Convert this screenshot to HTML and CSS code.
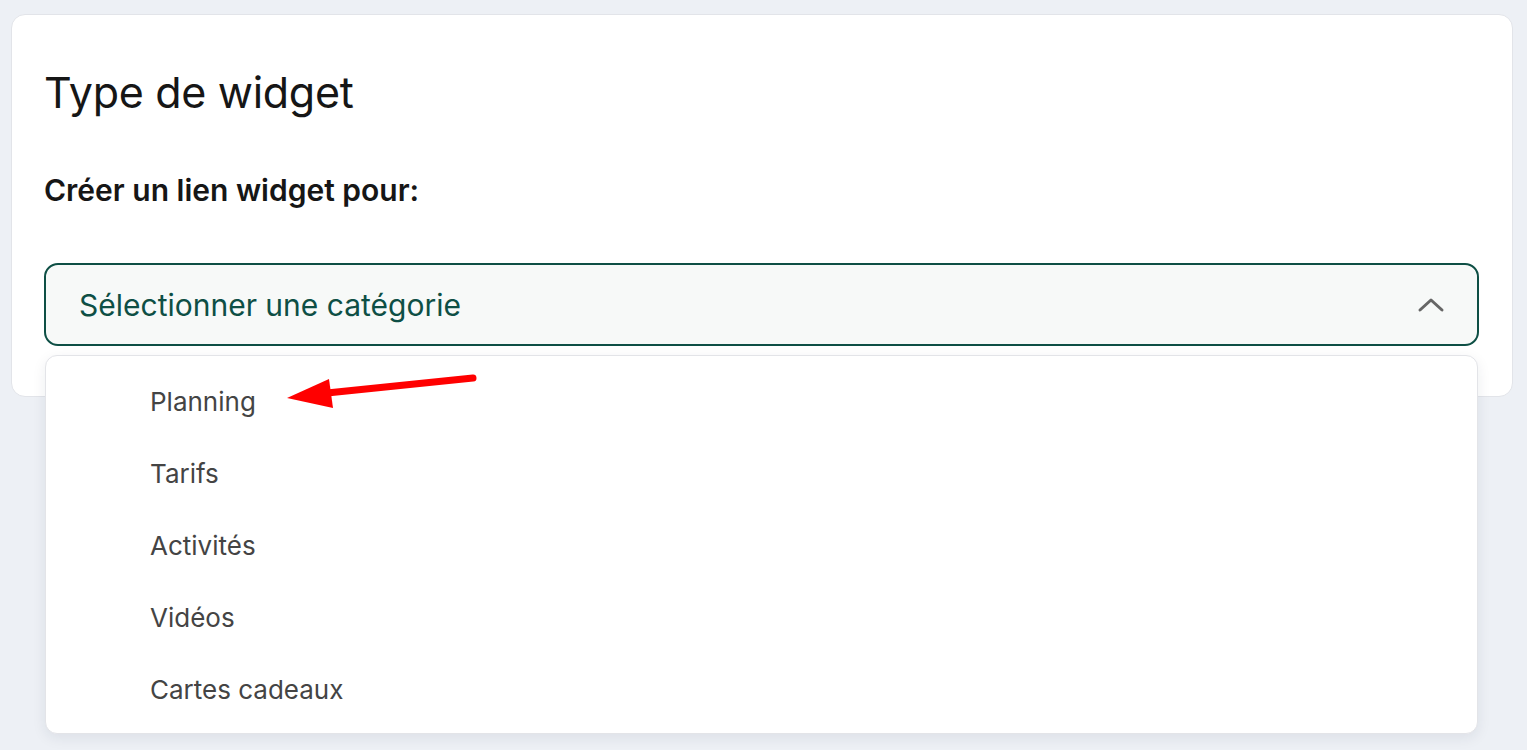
FILE: index.html
```html
<!DOCTYPE html>
<html lang="fr">
<head>
<meta charset="UTF-8">
<meta name="viewport" content="width=device-width, initial-scale=1.0">
<title>Type de widget</title>
<link rel="stylesheet" href="styles.css">
</head>
<body>

<div class="page">
    <div class="card">
        <h1>Type de widget</h1>
        <p class="label">Créer un lien widget pour:</p>

        <div class="select-wrap">
            <div class="select">
                <span>Sélectionner une catégorie</span>
                <svg class="chevron" width="28" height="16" viewBox="0 0 28 16">
                    <path d="M3 13 L14 3 L25 13" fill="none" stroke="#666" stroke-width="3" stroke-linecap="round" stroke-linejoin="round"/>
                </svg>
            </div>

            <ul class="dropdown">
                <li>Planning</li>
                <li>Tarifs</li>
                <li>Activités</li>
                <li>Vidéos</li>
                <li>Cartes cadeaux</li>
            </ul>

            <svg class="arrow" width="200" height="40" viewBox="0 0 200 40">
                <line x1="186" y1="10" x2="40" y2="25" stroke="#ff0000" stroke-width="7" stroke-linecap="round"/>
                <polygon points="0,30 42,11 46,40" fill="#ff0000"/>
            </svg>
        </div>
    </div>
</div>

</body>
</html>
```

FILE: styles.css
```css
html, body {
    height: 100%;
}
body {
    font-family: Inter, "Noto Sans", sans-serif;
    margin: 0;
    padding: 0;
    background-color: #edf0f5;
    color: #161616;
}
.page {
    min-height: 750px;
    box-sizing: border-box;
    padding: 14px 14px 0 11px;
}
.card {
    background-color: #fff;
    border: 1px solid #e2e4e9;
    border-radius: 14px;
    padding: 52px 33px 50px 32px;
}
h1 {
    margin: 0;
    font-size: 43px;
    font-weight: 400;
    line-height: 50px;
    letter-spacing: -0.3px;
}
.label {
    margin: 55px 0 0 0;
    font-size: 30px;
    font-weight: 600;
    line-height: 36px;
}
.select-wrap {
    position: relative;
    margin-top: 55px;
}
.select {
    box-sizing: border-box;
    height: 83px;
    display: flex;
    align-items: center;
    justify-content: space-between;
    padding: 0 32px 0 33px;
    background-color: #f7f9f8;
    border: 2px solid #0e4f45;
    border-radius: 14px;
    color: #0e4f45;
    font-size: 30px;
}
.dropdown {
    position: absolute;
    top: 92px;
    left: 1px;
    right: 1px;
    list-style: none;
    margin: 0;
    padding: 10px 0 7px 104px;
    background-color: #fff;
    border: 1px solid #e3e4e8;
    border-radius: 12px;
    box-shadow: 0 4px 14px rgba(30, 40, 60, 0.08);
}
.dropdown li {
    height: 72px;
    line-height: 72px;
    font-size: 26px;
    color: #444;
}
.arrow {
    position: absolute;
    left: 243px;
    top: 105px;
}
```
